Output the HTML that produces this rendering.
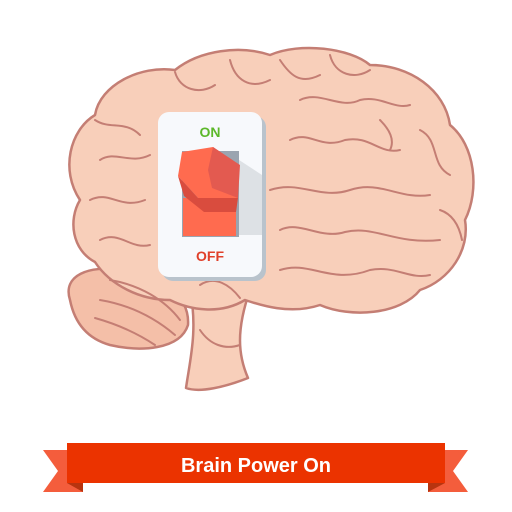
<!DOCTYPE html>
<html><head><style>body{margin:0;background:#fff}svg{display:block}</style></head><body>
<svg width="512" height="512" viewBox="0 0 512 512" xmlns="http://www.w3.org/2000/svg">
<defs><clipPath id="pl"><rect x="182" y="151" width="80" height="120"/></clipPath></defs>
<g stroke="#c47e74" stroke-width="2.5" stroke-linejoin="round" fill="#f8cfba">
<path d="M190 290 C198 330 190 360 186 388 C200 393 225 387 248 378 C238 355 236 330 250 290 Z"/>
<path d="M70 300 C62 275 90 265 120 270 C160 275 190 295 188 325 C180 350 140 352 110 345 C85 338 74 320 70 300 Z" fill="#f4bfa8"/>
<path d="M80 200 C60 170 70 130 95 115 C100 85 140 65 175 70 C200 50 240 45 270 55 C300 42 350 48 370 65 C410 65 445 90 450 125 C475 145 480 190 465 220 C470 250 450 280 420 290 C400 315 350 318 320 305 C290 315 260 305 245 300 C220 315 190 310 170 300 C140 300 110 285 95 262 C72 250 68 220 80 200 Z"/>
</g>
<g stroke="#c47e74" stroke-width="2" fill="none" stroke-linecap="round">
<path d="M95 120 C110 130 125 120 140 135 M100 160 C115 150 130 165 150 155 M90 200 C110 190 120 210 145 200 M100 240 C120 230 130 250 150 245"/>
<path d="M175 72 C180 90 200 95 215 85 M230 60 C235 80 250 90 270 80 M280 60 C290 75 300 85 320 75 M330 55 C335 75 355 80 370 70"/>
<path d="M300 100 C320 90 340 110 360 100 C380 95 395 110 410 105 M290 140 C310 130 320 150 345 140 C370 135 380 155 400 150 M420 130 C440 140 430 165 450 175"/>
<path d="M270 190 C300 180 320 200 350 190 C380 180 400 200 430 195 M280 230 C300 220 320 240 345 232 C375 225 395 245 440 240"/>
<path d="M280 270 C310 260 330 285 370 270 C395 265 410 280 430 275 M200 285 C215 275 230 285 240 298"/>
<path d="M110 280 C140 285 165 300 180 320 M100 300 C130 305 155 318 175 335 M95 318 C120 325 140 335 155 345"/>
<path d="M440 210 C455 215 460 230 462 240 M380 120 C390 130 395 140 390 150 M200 330 C210 345 225 350 240 345"/>
</g>
<rect x="162" y="116" width="104" height="165" rx="11" fill="#b9c3cc"/>
<rect x="158" y="112" width="104" height="165" rx="11" fill="#f7f9fc"/>
<g clip-path="url(#pl)"><path d="M236 158 L262 175 L262 235 L238 235 Z" fill="#dde1e5"/></g>
<rect x="182" y="151" width="57" height="86" fill="#9aa4b0"/>
<path d="M183 198 L183 236 L236 236 L236 198 Z" fill="#ff6b4f"/>
<path d="M182 152 L178 176 L198 198 L238 198 L238 164 L213 147 Z" fill="#ff6b4f"/>
<path d="M213 147 L208 170 L212 188 L238 198 L240 165 Z" fill="#e35a50"/>
<path d="M178 176 L184 196 L204 212 L236 212 L238 198 L198 198 Z" fill="#d94c3e"/>
<text x="210" y="137" text-anchor="middle" font-family="Liberation Sans, sans-serif" font-weight="bold" font-size="14" fill="#5cb82a">ON</text>
<text x="210" y="261" text-anchor="middle" font-family="Liberation Sans, sans-serif" font-weight="bold" font-size="14" fill="#e0402a">OFF</text>
<path d="M43 450 L83 450 L83 492 L43 492 L58 471 Z" fill="#f45d3c"/>
<path d="M468 450 L428 450 L428 492 L468 492 L453 471 Z" fill="#f45d3c"/>
<path d="M67 483 L83 492 L83 483 Z M445 483 L428 492 L428 483 Z" fill="#b8340f"/>
<rect x="67" y="443" width="378" height="40" fill="#eb3300"/>
<text x="256" y="472" text-anchor="middle" font-family="Liberation Sans, sans-serif" font-weight="bold" font-size="20" fill="#fff">Brain Power On</text>
</svg>
</body></html>
